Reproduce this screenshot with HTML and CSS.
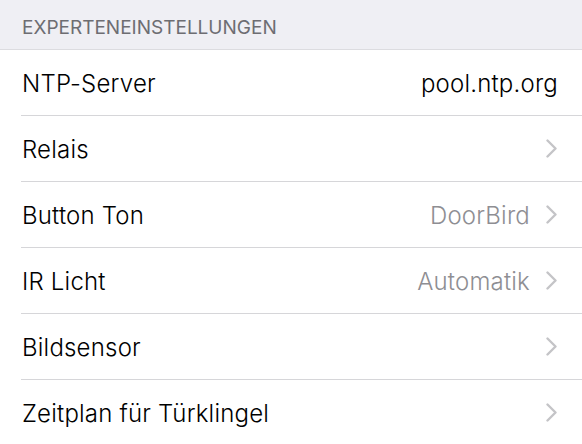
FILE: index.html
```html
<!DOCTYPE html>
<html lang="de">
<head>
<meta charset="utf-8">
<link rel="stylesheet" href="styles.css">
</head>
<body>
<div class="section-header">EXPERTENEINSTELLUNGEN</div>
<ul class="list">
  <li class="row"><span class="label">NTP-Server</span><span class="value value-dark">pool.ntp.org</span></li>
  <li class="row"><span class="label">Relais</span><span class="chev"><svg width="12" height="19" viewBox="0 0 12 19"><path d="M1.5 1.5 L9.5 9.5 L1.5 17.5" fill="none" stroke="#c4c4c7" stroke-width="2.4" stroke-linecap="round" stroke-linejoin="round"/></svg></span></li>
  <li class="row"><span class="label">Button Ton</span><span class="value">DoorBird</span><span class="chev"><svg width="12" height="19" viewBox="0 0 12 19"><path d="M1.5 1.5 L9.5 9.5 L1.5 17.5" fill="none" stroke="#c4c4c7" stroke-width="2.4" stroke-linecap="round" stroke-linejoin="round"/></svg></span></li>
  <li class="row"><span class="label">IR Licht</span><span class="value">Automatik</span><span class="chev"><svg width="12" height="19" viewBox="0 0 12 19"><path d="M1.5 1.5 L9.5 9.5 L1.5 17.5" fill="none" stroke="#c4c4c7" stroke-width="2.4" stroke-linecap="round" stroke-linejoin="round"/></svg></span></li>
  <li class="row"><span class="label">Bildsensor</span><span class="chev"><svg width="12" height="19" viewBox="0 0 12 19"><path d="M1.5 1.5 L9.5 9.5 L1.5 17.5" fill="none" stroke="#c4c4c7" stroke-width="2.4" stroke-linecap="round" stroke-linejoin="round"/></svg></span></li>
  <li class="row"><span class="label">Zeitplan für Türklingel</span><span class="chev"><svg width="12" height="19" viewBox="0 0 12 19"><path d="M1.5 1.5 L9.5 9.5 L1.5 17.5" fill="none" stroke="#c4c4c7" stroke-width="2.4" stroke-linecap="round" stroke-linejoin="round"/></svg></span></li>
</ul>
</body>
</html>
```
FILE: styles.css
```css
html, body {
  margin: 0;
  padding: 0;
  background: #ffffff;
  font-family: "Inter", "Roboto", "Liberation Sans", sans-serif;
  overflow: hidden;
}
.section-header {
  box-sizing: border-box;
  height: 50px;
  padding: 17px 0 0 22px;
  background: #efeff4;
  color: #6d6d72;
  font-size: 19px;
  line-height: 22px;
  border-bottom: 1px solid #dcdce0;
}
.list {
  list-style: none;
  margin: 0;
  padding: 0 0 0 21px;
}
.row {
  box-sizing: border-box;
  display: flex;
  align-items: center;
  height: 66px;
  padding: 2px 24px 0 0;
  border-bottom: 1px solid #d6d6d9;
  font-size: 24px;
  font-weight: 350;
  letter-spacing: 0.2px;
  color: #000000;
}
.label {
  flex: 1;
  padding-left: 1px;
}
.value {
  color: #8e8e93;
}
.value-dark {
  color: #000000;
}
.chev {
  display: flex;
  margin-left: 16px;
  margin-top: -2px;
}
```
